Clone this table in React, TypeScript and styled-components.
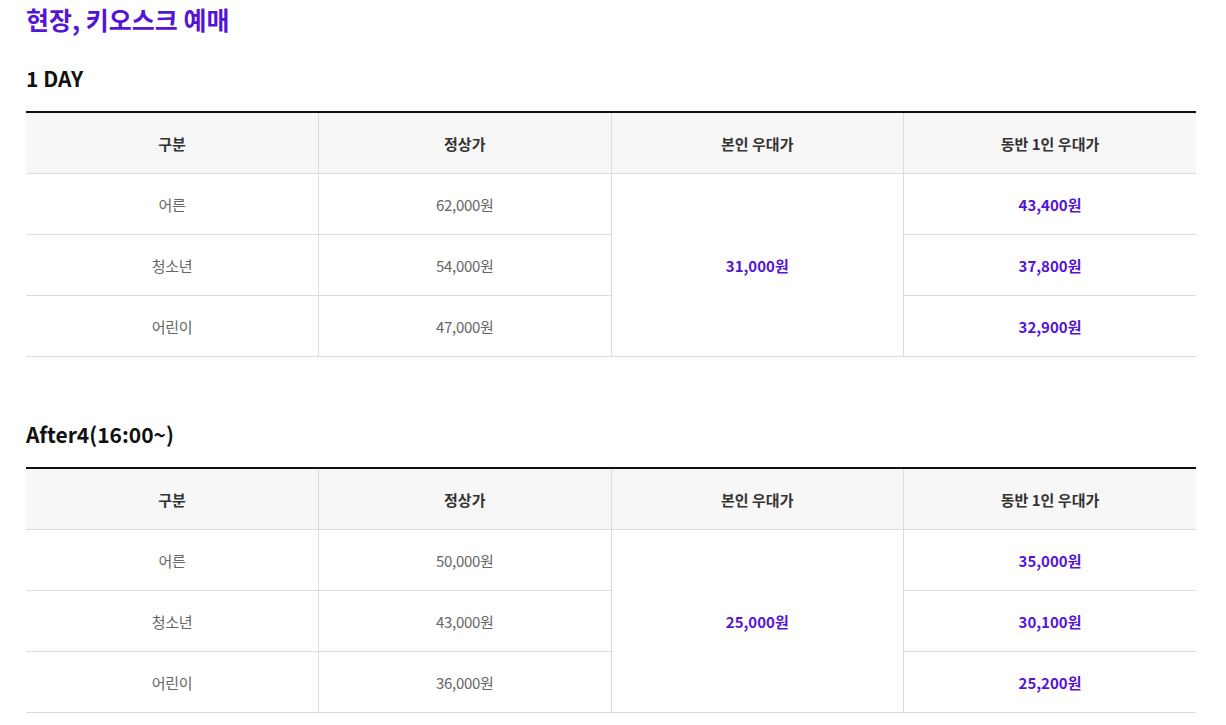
import React from "react";
import styled, { createGlobalStyle } from "styled-components";

const GlobalStyle = createGlobalStyle`
  body {
    margin: 0;
    background: #fff;
    font-family: "Noto Sans CJK KR", "Noto Sans", sans-serif;
  }
`;

const Page = styled.div`
  padding: 0 30px 0 26px;
  width: 1170px;
`;

const Title = styled.h2`
  margin: 0;
  font-size: 25px;
  line-height: 38px;
  font-weight: 700;
  color: #5514d6;
`;

const SubTitle = styled.h3<{ $gap: number }>`
  margin: ${({ $gap }) => $gap}px 0 0;
  font-size: 21px;
  line-height: 30px;
  font-weight: 700;
  color: #111;
`;

const Table = styled.table`
  margin-top: 18px;
  width: 100%;
  border-collapse: collapse;
  table-layout: fixed;
  border-top: 2px solid #111;
`;

const HeadCell = styled.th`
  height: 60px;
  padding: 0;
  background: #f7f7f7;
  border-bottom: 1px solid #dcdcdc;
  border-left: 1px solid #dcdcdc;
  font-size: 15px;
  font-weight: 700;
  color: #333;
  text-align: center;
  &:first-child {
    border-left: none;
  }
`;

const Cell = styled.td<{ $accent?: boolean }>`
  height: 60px;
  padding: 0;
  border-bottom: 1px solid #dcdcdc;
  border-left: 1px solid #dcdcdc;
  font-size: 15px;
  font-weight: ${({ $accent }) => ($accent ? 700 : 400)};
  color: ${({ $accent }) => ($accent ? "#5514d6" : "#666")};
  letter-spacing: ${({ $accent }) => ($accent ? "0" : "-0.3px")};
  text-align: center;
  &:first-child {
    border-left: none;
  }
`;

type Row = { label: string; normal: string; companion: string };

type PriceTableProps = { title: string; gap: number; own: string; rows: Row[] };

const PriceTable = ({ title, gap, own, rows }: PriceTableProps) => (
  <>
    <SubTitle $gap={gap}>{title}</SubTitle>
    <Table>
      <thead>
        <tr>
          <HeadCell>구분</HeadCell>
          <HeadCell>정상가</HeadCell>
          <HeadCell>본인 우대가</HeadCell>
          <HeadCell>동반 1인 우대가</HeadCell>
        </tr>
      </thead>
      <tbody>
        {rows.map((row, i) => (
          <tr key={row.label}>
            <Cell>{row.label}</Cell>
            <Cell>{row.normal}</Cell>
            {i === 0 && (
              <Cell rowSpan={rows.length} $accent>
                {own}
              </Cell>
            )}
            <Cell $accent>{row.companion}</Cell>
          </tr>
        ))}
      </tbody>
    </Table>
  </>
);

const oneDay: Row[] = [
  { label: "어른", normal: "62,000원", companion: "43,400원" },
  { label: "청소년", normal: "54,000원", companion: "37,800원" },
  { label: "어린이", normal: "47,000원", companion: "32,900원" },
];

const after4: Row[] = [
  { label: "어른", normal: "50,000원", companion: "35,000원" },
  { label: "청소년", normal: "43,000원", companion: "30,100원" },
  { label: "어린이", normal: "36,000원", companion: "25,200원" },
];

export default function App() {
  return (
    <>
      <GlobalStyle />
      <Page>
        <Title>현장, 키오스크 예매</Title>
        <PriceTable title="1 DAY" gap={25} own="31,000원" rows={oneDay} />
        <PriceTable title="After4(16:00~)" gap={62} own="25,000원" rows={after4} />
      </Page>
    </>
  );
}
